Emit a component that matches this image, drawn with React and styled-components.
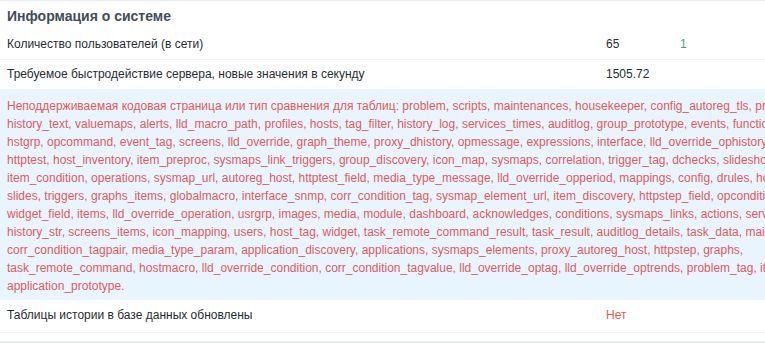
import React from 'react';
import styled, { createGlobalStyle } from 'styled-components';

const GlobalStyle = createGlobalStyle`
  html, body {
    margin: 0;
    padding: 0;
    background: #ebeef0;
    overflow: hidden;
  }
  body {
    font-family: "Liberation Sans", Arial, sans-serif;
    font-size: 12px;
    color: #1f2c33;
  }
`;

const Widget = styled.div`
  width: 900px;
  background: #fff;
  border-top: 1px solid #ebeef0;
  padding-bottom: 8px;
`;

const Head = styled.div`
  height: 29px;
  display: flex;
  align-items: center;
  padding: 0 7px;
`;

const Title = styled.h4`
  margin: 0;
  font-size: 14px;
  font-weight: bold;
  color: #3d4d5b;
`;

const Row = styled.div`
  display: grid;
  grid-template-columns: 599px 74px 1fr;
  border-bottom: ${(p) => (p.$noBorder ? 'none' : '1px solid #ebeef0')};
  background: ${(p) => (p.$highlight ? '#e8f5ff' : '#fff')};
`;

const Cell = styled.div`
  padding: ${(p) => p.$pad || '7px 7px'};
  line-height: 15px;
  color: ${(p) => p.$color || '#1f2c33'};
  white-space: nowrap;
`;

const ErrorCell = styled.div`
  grid-column: 1 / -1;
  padding: 8px 7px 5px;
  color: #e45959;
  line-height: 18px;
`;

const ErrorLine = styled.div`
  white-space: nowrap;
`;

const errorLines = [
  'Неподдерживаемая кодовая страница или тип сравнения для таблиц: problem, scripts, maintenances, housekeeper, config_autoreg_tls, proxy,',
  'history_text, valuemaps, alerts, lld_macro_path, profiles, hosts, tag_filter, history_log, services_times, auditlog, group_prototype, events, functions,',
  'hstgrp, opcommand, event_tag, screens, lld_override, graph_theme, proxy_dhistory, opmessage, expressions, interface, lld_override_ophistory,',
  'httptest, host_inventory, item_preproc, sysmaps_link_triggers, group_discovery, icon_map, sysmaps, correlation, trigger_tag, dchecks, slideshows,',
  'item_condition, operations, sysmap_url, autoreg_host, httptest_field, media_type_message, lld_override_opperiod, mappings, config, drules, host_discovery,',
  'slides, triggers, graphs_items, globalmacro, interface_snmp, corr_condition_tag, sysmap_element_url, item_discovery, httpstep_field, opconditions,',
  'widget_field, items, lld_override_operation, usrgrp, images, media, module, dashboard, acknowledges, conditions, sysmaps_links, actions, services,',
  'history_str, screens_items, icon_mapping, users, host_tag, widget, task_remote_command_result, task_result, auditlog_details, task_data, maintenances_hosts,',
  'corr_condition_tagpair, media_type_param, application_discovery, applications, sysmaps_elements, proxy_autoreg_host, httpstep, graphs,',
  'task_remote_command, hostmacro, lld_override_condition, corr_condition_tagvalue, lld_override_optag, lld_override_optrends, problem_tag, items_applications,',
  'application_prototype.',
];

const App = () => (
  <>
    <GlobalStyle />
    <Widget>
      <Head>
        <Title>Информация о системе</Title>
      </Head>
      <Row>
        <Cell>Количество пользователей (в сети)</Cell>
        <Cell>65</Cell>
        <Cell $color="#3fa57a">1</Cell>
      </Row>
      <Row $noBorder>
        <Cell>Требуемое быстродействие сервера, новые значения в секунду</Cell>
        <Cell>1505.72</Cell>
        <Cell />
      </Row>
      <Row $highlight $noBorder>
        <ErrorCell>
          {errorLines.map((line) => (
            <ErrorLine key={line}>{line}</ErrorLine>
          ))}
        </ErrorCell>
      </Row>
      <Row>
        <Cell $pad="8px 7px 9px">Таблицы истории в базе данных обновлены</Cell>
        <Cell $pad="8px 7px 9px" $color="#e45959">Нет</Cell>
        <Cell />
      </Row>
    </Widget>
  </>
);

export default App;
